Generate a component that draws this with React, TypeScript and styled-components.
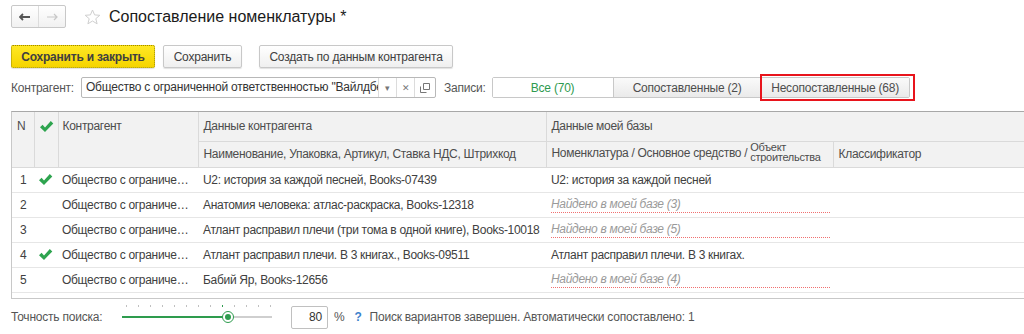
import React from 'react';
import styled, { createGlobalStyle } from 'styled-components';

const GlobalStyle = createGlobalStyle`
  html, body {
    margin: 0;
    padding: 0;
    background: #fff;
    font-family: "Liberation Sans", Arial, sans-serif;
    font-size: 12px;
    letter-spacing: -0.22px;
    color: #404040;
    overflow: hidden;
  }
`;

const Page = styled.div`
  width: 1024px;
  height: 334px;
  overflow: hidden;
  padding: 5px 0 0 11px;
  box-sizing: border-box;
`;

const TitleBar = styled.div`
  display: flex;
  align-items: center;
  height: 23px;
`;

const NavGroup = styled.div`
  display: flex;
  height: 23px;
  border: 1px solid #c8c8c8;
  border-radius: 2px;
  box-sizing: border-box;
  background: linear-gradient(#fff, #f1f1f1);
`;

const NavButton = styled.div<{ $disabled?: boolean }>`
  width: 26px;
  display: flex;
  align-items: center;
  justify-content: center;
  color: ${(p) => (p.$disabled ? '#c8c8c8' : '#555')};
  & + & {
    border-left: 1px solid #dcdcdc;
  }
`;

const Star = styled.div`
  margin-left: 18px;
  display: flex;
`;

const Title = styled.h1`
  margin: 0 0 0 8px;
  font-size: 16px;
  font-weight: normal;
  color: #1a1a1a;
  letter-spacing: 0;
`;

const Toolbar = styled.div`
  display: flex;
  gap: 8px;
  margin-top: 17px;
  height: 23px;
`;

const Button = styled.div<{ $primary?: boolean; $gap?: number; $w: number }>`
  display: flex;
  align-items: center;
  justify-content: center;
  width: ${(p) => p.$w}px;
  box-sizing: border-box;
  border-radius: 2px;
  margin-left: ${(p) => p.$gap ?? 0}px;
  color: #404040;
  font-weight: ${(p) => (p.$primary ? 'bold' : 'normal')};
  border: 1px ${(p) => (p.$primary ? 'dotted #9c8a00' : 'solid #c8c8c8')};
  background: ${(p) => (p.$primary ? 'linear-gradient(#ffe824, #f5d400)' : 'linear-gradient(#fff, #efefef)')};
  box-shadow: 0 1px 1px rgba(0, 0, 0, 0.12);
`;

const FilterRow = styled.div`
  display: flex;
  align-items: center;
  margin-top: 9px;
  height: 21px;
`;

const Label = styled.span`
  color: #555;
  margin-right: 6px;
`;

const Field = styled.div`
  display: flex;
  width: 355px;
  height: 21px;
  border: 1px solid #b8b8b8;
  border-radius: 2px;
  box-sizing: border-box;
  margin-left: 1px;
`;

const FieldText = styled.div`
  flex: 1;
  min-width: 0;
  padding: 0 4px;
  line-height: 19px;
  white-space: nowrap;
  overflow: hidden;
  color: #333;
`;

const FieldButton = styled.div<{ $w: number }>`
  width: ${(p) => p.$w}px;
  flex: none;
  border-left: 1px solid #dcdcdc;
  display: flex;
  align-items: center;
  justify-content: center;
  color: #777;
  font-size: 9px;
`;

const RecordsLabel = styled(Label)`
  margin-left: 8px;
  margin-right: 6px;
`;

const Segments = styled.div`
  display: flex;
  height: 21px;
  border: 1px solid #c8c8c8;
  border-radius: 2px;
  box-sizing: border-box;
`;

const Segment = styled.div<{ $w: number; $active?: boolean; $boxed?: boolean }>`
  width: ${(p) => p.$w}px;
  display: flex;
  align-items: center;
  justify-content: center;
  box-sizing: border-box;
  color: ${(p) => (p.$active ? '#2d9a4f' : '#4d4d4d')};
  background: ${(p) => (p.$active ? '#fff' : 'linear-gradient(#fafafa, #eaeaea)')};
  & + & {
    border-left: 1px solid #c8c8c8;
  }
  ${(p) =>
    p.$boxed &&
    `
    position: relative;
    &::after {
      content: '';
      position: absolute;
      left: -2px;
      top: -4px;
      right: -6px;
      bottom: -4px;
      border: 2px solid #e8141c;
    }
  `}
`;

const TableWrap = styled.div`
  margin-top: 13px;
  height: 186px;
  overflow: hidden;
  border-top: 1px solid #a8a8a8;
  border-bottom: 1px solid #c8c8c8;
  border-left: 1px solid #c8c8c8;
  width: 1020px;
`;

const Table = styled.table`
  border-collapse: collapse;
  table-layout: fixed;
  width: 1020px;
  letter-spacing: -0.3px;
`;

const Th = styled.th<{ $h?: number }>`
  background: #f2f2f2;
  font-weight: normal;
  text-align: left;
  vertical-align: top;
  color: #4d4d4d;
  height: ${(p) => p.$h ?? 25}px;
  padding: 7px 5px 0 5px;
  box-sizing: border-box;
  border: 1px solid #dadada;
  border-top: none;
  white-space: nowrap;
  overflow: hidden;
  &:first-child {
    border-left: none;
  }
`;

const SubTh = styled(Th)`
  vertical-align: middle;
  padding-top: 0;
`;

const Small = styled.span`
  display: inline-block;
  font-size: 11px;
  line-height: 10px;
  vertical-align: middle;
  margin-top: -4px;
`;

const Td = styled.td`
  height: 25px;
  padding: 0 3px 0 5px;
  box-sizing: border-box;
  border-bottom: 1px solid #e6e6e6;
  white-space: nowrap;
  overflow: hidden;
  text-overflow: ellipsis;
  color: #404040;
`;

const NumTd = styled(Td)`
  padding: 0 0 0 8px;
`;

const CheckTd = styled(Td)`
  padding: 3px 0 0 4px;
`;

const NameTd = styled(Td)`
  padding: 0 4px;
`;

const Found = styled.div`
  color: #9a9a9a;
  font-style: italic;
  border-bottom: 1px dotted #f07070;
  line-height: 15px;
`;

const Footer = styled.div`
  display: flex;
  align-items: center;
  height: 24px;
  margin-top: 6px;
`;

const FooterLabel = styled(Label)`
  width: 111px;
  margin: 0;
`;

const Slider = styled.div`
  position: relative;
  width: 150px;
  height: 24px;
`;

const Track = styled.div`
  position: absolute;
  left: 0;
  right: 0;
  top: 11px;
  height: 2px;
  background: #cfcfcf;
`;

const Fill = styled.div`
  position: absolute;
  left: 0;
  top: 11px;
  height: 2px;
  width: 106px;
  background: #2e9c4e;
`;

const Thumb = styled.div`
  position: absolute;
  left: 100px;
  top: 6px;
  width: 12px;
  height: 12px;
  box-sizing: border-box;
  border-radius: 50%;
  border: 1px solid #2e9c4e;
  background: #fff;
  &::after {
    content: '';
    position: absolute;
    left: 2px;
    top: 2px;
    width: 6px;
    height: 6px;
    border-radius: 50%;
    background: #2e9c4e;
  }
`;

const Tick = styled.div<{ $on?: boolean }>`
  position: absolute;
  top: 0;
  width: 1px;
  height: 2px;
  background: ${(p) => (p.$on ? '#2e9c4e' : '#c0c0c0')};
`;

const Percent = styled.div`
  width: 37px;
  height: 23px;
  margin-left: 19px;
  box-sizing: border-box;
  border: 1px solid #c0c0c0;
  border-radius: 2px;
  text-align: right;
  padding-right: 5px;
  line-height: 21px;
  color: #333;
`;

const Unit = styled.span`
  margin-left: 6px;
  color: #555;
`;

const Help = styled.span`
  margin-left: 10px;
  color: #3d82cc;
  font-weight: bold;
`;

const Status = styled.span`
  margin-left: 8px;
  color: #555;
`;

const Check = () => (
  <svg width="15" height="13" viewBox="0 0 15 13">
    <path d="M1 7.2 L3.6 4.8 L6 7.4 L11.8 1 L14.3 3.4 L6 12 Z" fill="#2ea44f" />
  </svg>
);

const rows = [
  { n: 1, ok: true, data: 'U2: история за каждой песней, Books-07439', mine: 'U2: история за каждой песней' },
  { n: 2, ok: false, data: 'Анатомия человека: атлас-раскраска, Books-12318', found: 3 },
  { n: 3, ok: false, data: 'Атлант расправил плечи (три тома в одной книге), Books-10018', found: 5 },
  { n: 4, ok: true, data: 'Атлант расправил плечи. В 3 книгах., Books-09511', mine: 'Атлант расправил плечи. В 3 книгах.' },
  { n: 5, ok: false, data: 'Бабий Яр, Books-12656', found: 4 },
  { n: 6, ok: false, data: 'Бегущий в лабиринте, Books-11208', found: 2 },
];

const ticks = Array.from({ length: 13 }, (_, i) => 4 + i * 12);

export default function App() {
  return (
    <>
      <GlobalStyle />
      <Page>
        <TitleBar>
          <NavGroup>
            <NavButton>
              <svg width="12" height="8" viewBox="0 0 12 8">
                <path d="M1 4 H11 M4 1 L1 4 L4 7" stroke="currentColor" strokeWidth="1.8" fill="none" />
              </svg>
            </NavButton>
            <NavButton $disabled>
              <svg width="12" height="8" viewBox="0 0 12 8">
                <path d="M1 4 H11 M8 1 L11 4 L8 7" stroke="currentColor" strokeWidth="1.2" fill="none" />
              </svg>
            </NavButton>
          </NavGroup>
          <Star>
            <svg width="17" height="16" viewBox="0 0 17 16">
              <path
                d="M8.5 1 L10.6 5.9 L15.8 6.3 L11.8 9.7 L13.1 14.8 L8.5 12 L3.9 14.8 L5.2 9.7 L1.2 6.3 L6.4 5.9 Z"
                fill="none"
                stroke="#cfcfcf"
                strokeWidth="1"
              />
            </svg>
          </Star>
          <Title>Сопоставление номенклатуры *</Title>
        </TitleBar>

        <Toolbar>
          <Button $primary $w={144}>
            Сохранить и закрыть
          </Button>
          <Button $w={79}>Сохранить</Button>
          <Button $w={194} $gap={9}>
            Создать по данным контрагента
          </Button>
        </Toolbar>

        <FilterRow>
          <Label>Контрагент:</Label>
          <Field>
            <FieldText>Общество с ограниченной ответственностью "Вайлдберриз"</FieldText>
            <FieldButton $w={17}>▾</FieldButton>
            <FieldButton $w={17}>✕</FieldButton>
            <FieldButton $w={20}>
              <svg width="10" height="10" viewBox="0 0 10 10">
                <path d="M3.5 0.5 H9.5 V6.5 H3.5 Z M0.5 3.5 V9.5 H6.5" fill="none" stroke="#777" />
              </svg>
            </FieldButton>
          </Field>
          <RecordsLabel>Записи:</RecordsLabel>
          <Segments>
            <Segment $w={120} $active>
              Все (70)
            </Segment>
            <Segment $w={148}>Сопоставленные (2)</Segment>
            <Segment $w={148} $boxed>
              Несопоставленные (68)
            </Segment>
          </Segments>
        </FilterRow>

        <TableWrap>
          <Table>
            <colgroup>
              <col style={{ width: 22 }} />
              <col style={{ width: 24 }} />
              <col style={{ width: 140 }} />
              <col style={{ width: 348 }} />
              <col style={{ width: 287 }} />
              <col />
            </colgroup>
            <thead>
              <tr>
                <Th rowSpan={2} $h={55}>N</Th>
                <Th rowSpan={2} $h={55} style={{ paddingLeft: 4, paddingTop: 8 }}>
                  <Check />
                </Th>
                <Th rowSpan={2} $h={55} style={{ paddingLeft: 4 }}>Контрагент</Th>
                <Th $h={29}>Данные контрагента</Th>
                <Th colSpan={2} $h={29}>Данные моей базы</Th>
              </tr>
              <tr>
                <SubTh $h={26}>Наименование, Упаковка, Артикул, Ставка НДС, Штрихкод</SubTh>
                <SubTh $h={26}>
                  Номенклатура / Основное средство / <Small>Объект<br />строительства</Small>
                </SubTh>
                <SubTh $h={26}>Классификатор</SubTh>
              </tr>
            </thead>
            <tbody>
              {rows.map((r) => (
                <tr key={r.n}>
                  <NumTd>{r.n}</NumTd>
                  <CheckTd>{r.ok && <Check />}</CheckTd>
                  <NameTd>Общество с ограниченной ответственностью</NameTd>
                  <Td>{r.data}</Td>
                  <Td>{r.mine ?? <Found>Найдено в моей базе ({r.found})</Found>}</Td>
                  <Td />
                </tr>
              ))}
            </tbody>
          </Table>
        </TableWrap>

        <Footer>
          <FooterLabel>Точность поиска:</FooterLabel>
          <Slider>
            {ticks.map((x) => (
              <Tick key={x} style={{ left: x }} $on={x === 100} />
            ))}
            <Track />
            <Fill />
            <Thumb />
          </Slider>
          <Percent>80</Percent>
          <Unit>%</Unit>
          <Help>?</Help>
          <Status>Поиск вариантов завершен. Автоматически сопоставлено: 1</Status>
        </Footer>
      </Page>
    </>
  );
}
